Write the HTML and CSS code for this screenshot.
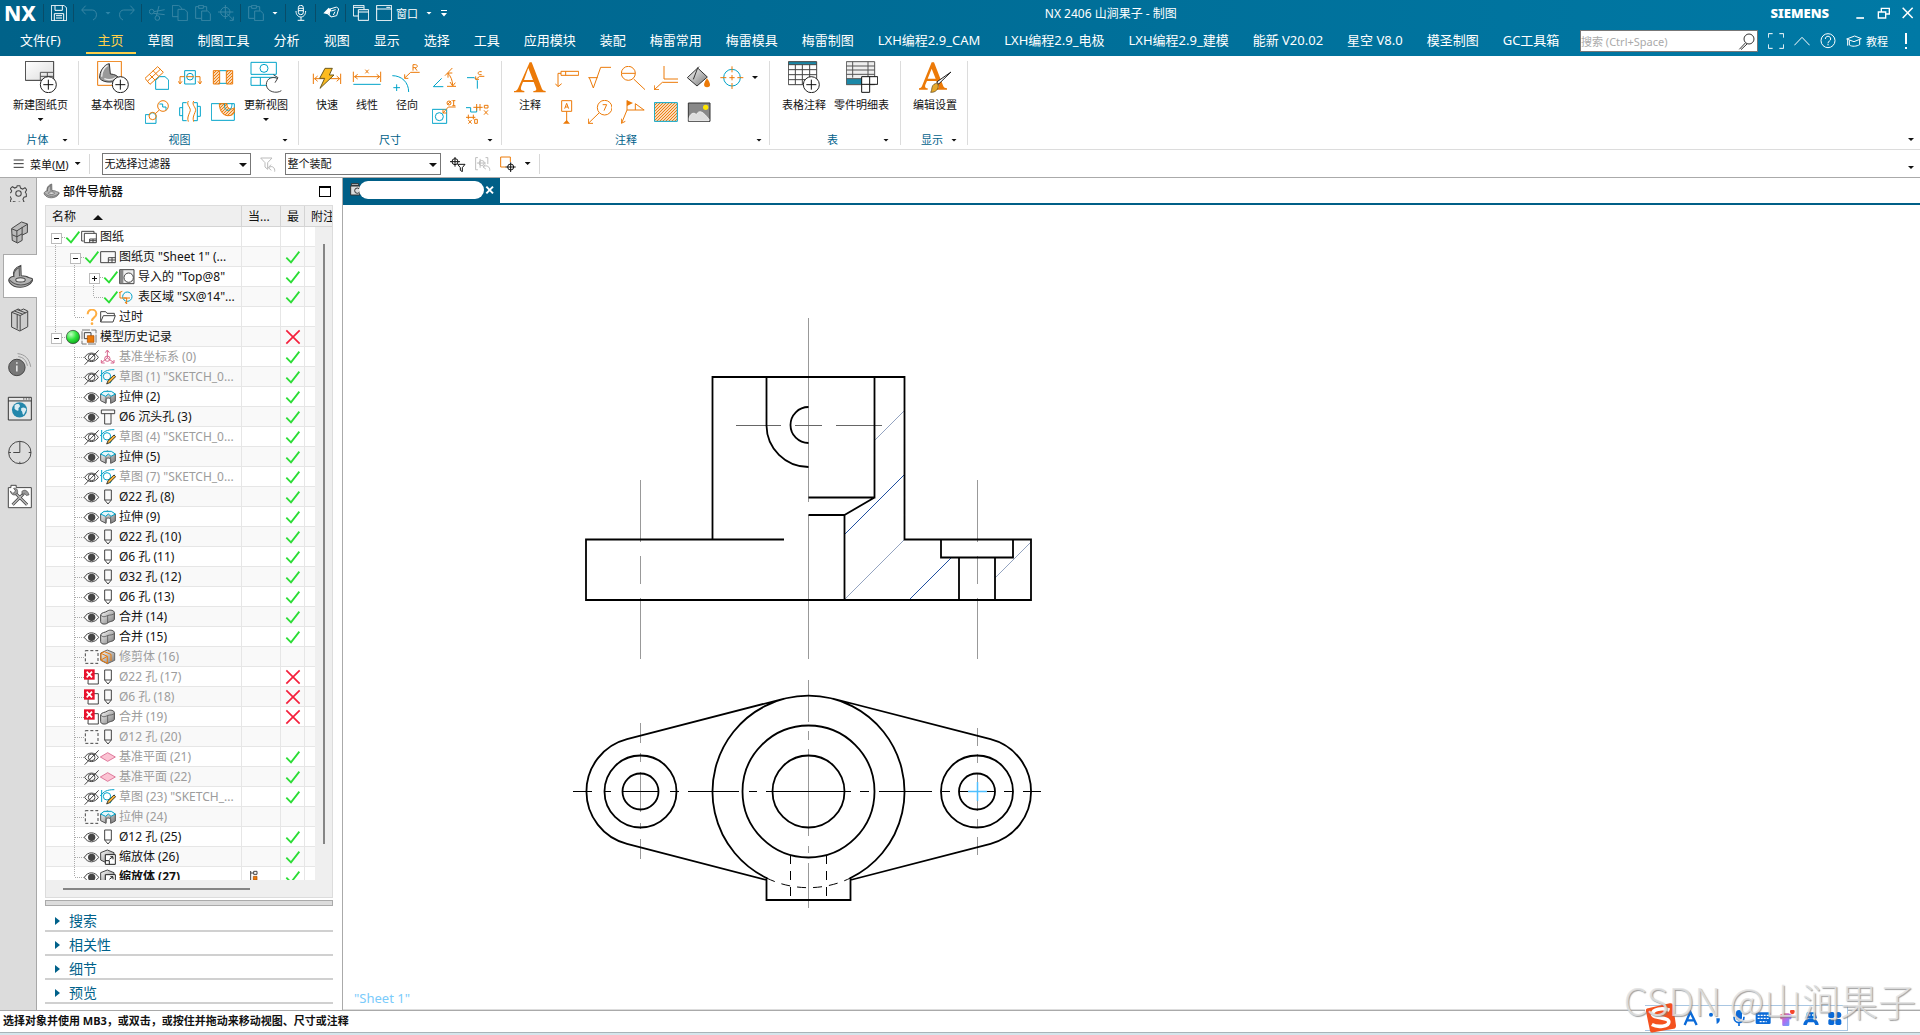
FILE: index.html
```html
<!DOCTYPE html>
<html lang="zh-CN">
<head>
<meta charset="utf-8">
<title>NX 2406 - 制图</title>
<link rel="stylesheet" href="styles.css">
</head>
<body>
<svg class="sprite" aria-hidden="true">
  <defs>
    <linearGradient id="steel" x1="0" y1="0" x2="1" y2="1"><stop offset="0" stop-color="#fff"/><stop offset="1" stop-color="#777"/></linearGradient>
    <linearGradient id="pale" x1="0" y1="0" x2="1" y2="1"><stop offset="0" stop-color="#fff"/><stop offset="1" stop-color="#ddd"/></linearGradient>
    <linearGradient id="shirt" x1="0" y1="0" x2="1" y2="1"><stop offset="0" stop-color="#ff6a4d"/><stop offset=".5" stop-color="#b06cf0"/><stop offset="1" stop-color="#4fb6ff"/></linearGradient>
    <radialGradient id="ball" cx=".35" cy=".3" r=".8"><stop offset="0" stop-color="#c4ffc4"/><stop offset=".5" stop-color="#2ee43c"/><stop offset="1" stop-color="#0a9a18"/></radialGradient>
    <pattern id="hatch" width="9" height="9" patternUnits="userSpaceOnUse"><path d="M-2 11L11-2M-2 2L2-2M7 11L11 7" stroke="#ec7a08" stroke-width="3.5"/></pattern>
  </defs>
  <symbol id="ok" viewBox="195 177 48 48"><path d="M199 203l14 14 25-32" stroke="#2bdd35" stroke-width="5.5"/></symbol>
  <symbol id="bad" viewBox="855 477 48 48"><path d="M859 481l40 40M899 481l-40 40" stroke="#f5203c" stroke-width="5"/></symbol>
  <symbol id="sheets" viewBox="243 177 48 48"><path class="k" d="M251 213h-6v-29h37v6M253 190h36v28h-36z"/><path class="k" d="M269 218v-11h20M279 207v11M269 212h20"/></symbol>
  <symbol id="sheet" viewBox="300 237 48 48"><path class="k" d="M302 245h44v33h-44z"/><path class="k" d="M325 278v-15h21M336 263v15M325 270h21"/></symbol>
  <symbol id="import" viewBox="357 297 48 48"><path class="k" fill="#eee" d="M359 299h43v42h-43z"/><path d="M360 300h10v40h-10z" fill="#888"/><circle class="k" cx="386" cy="323" r="14" fill="#fff"/></symbol>
  <symbol id="region" viewBox="357 357 48 48"><circle class="c" cx="382" cy="380" r="14"/><path class="o" d="M360 366v18h20v18M357 368l10-4M372 384h18M380 402l-5-6"/></symbol>
  <symbol id="ask" viewBox="252 417 48 48"><path d="M263 433c0-20 26-17 26-2 0 12-13 10-13 22" stroke="#ffae42" stroke-width="6"/><circle cx="276" cy="461" r="4" fill="#ffae42"/></symbol>
  <symbol id="folder" viewBox="300 417 48 48"><path class="k" d="M302 456v-31h15l4 5h22v7M302 456l8-19h36l-7 19z"/></symbol>
  <symbol id="green" viewBox="195 477 48 48"><circle cx="219" cy="501" r="20" fill="url(#ball)" stroke="#333" stroke-width="2"/></symbol>
  <symbol id="hist" viewBox="243 477 48 48"><path d="M246 480h42v42h-42z" stroke="#777" stroke-width="3" stroke-dasharray="24 4"/><path class="k" d="M253 488h20v18h-20z"/><path d="M262 497h20v20h-20z" fill="#ec7a08" stroke="#a34a00" stroke-width="2"/></symbol>
  <symbol id="hid" viewBox="252 537 48 48"><path class="k" d="M254 562c10-17 31-17 41 0-10 17-31 17-41 0z"/><circle class="k" cx="275" cy="562" r="10"/><path class="k" d="M254 584l42-43"/></symbol>
  <symbol id="eye" viewBox="252 657 48 48"><path class="k" d="M253 682c10-18 32-18 43 0-11 18-33 18-43 0z"/><circle cx="275" cy="682" r="11" fill="#444"/></symbol>
  <symbol id="none" viewBox="252 657 48 48"><path class="k" stroke-dasharray="9 6" d="M256 662h38v38h-38z"/></symbol>
  <symbol id="err" viewBox="252 717 48 48"><path class="k" d="M265 731h30v31h-31z" fill="#fff"/><path d="M252 718h32v31h-32z" fill="#e8122c"/><path d="M260 725l16 17M276 725l-16 17" stroke="#fff" stroke-width="5"/></symbol>
  <symbol id="csys" viewBox="300 537 48 48"><path d="M322 542v22l-18 14M322 564l20 14M316 548l6-8 6 8M304 570v9h10M342 570v9h-10" stroke="#d8648c" stroke-width="3"/><circle cx="322" cy="566" r="8" stroke="#d8648c" stroke-width="3"/></symbol>
  <symbol id="sketch" viewBox="300 597 48 48"><path class="c" d="M305 600v36M301 618c10-14 20-19 42-19M330 640l14-26"/><circle class="c" cx="321" cy="619" r="11"/><path d="M320 642l4-10 18-17 5 5-18 18z" fill="#f6b43c" stroke="#222" stroke-width="2.5"/></symbol>
  <symbol id="extr" viewBox="300 657 48 48"><path d="M302 672l20-9 24 9v21l-14 7v-10c0-8-14-8-14 0v10l-16-8z" fill="url(#steel)" stroke="#555" stroke-width="3"/><path d="M318 680v18M332 680v18" stroke="#666" stroke-width="3"/><path class="c" d="M302 672l10-8h22l12 8-13 7-8-7-8 7z" fill="#e6f6fa"/></symbol>
  <symbol id="cbore" viewBox="300 717 48 48"><path class="k" d="M304 720h40v11h-40zM314 731v31h19v-31"/></symbol>
  <symbol id="hole" viewBox="300 177 48 48"><path class="k" d="M314 180h20v30l-10 12-10-12zM314 210h20"/></symbol>
  <symbol id="unite" viewBox="300 537 48 48"><path d="M302 555c1-8 14-7 20-12 8-5 21-2 21 5v19c0 8-14 6-20 12-8 6-21 3-21-4z" fill="url(#steel)" stroke="#444" stroke-width="3"/><path d="M302 555c6 8 14 5 20 2s18-1 21-7M323 557v22" stroke="#555" stroke-width="2.5"/></symbol>
  <symbol id="trim" viewBox="300 657 48 48"><path d="M322 660l22 9v22l-22 10-20-10v-22z" fill="url(#steel)" stroke="#666" stroke-width="3"/><path class="o" d="M303 670l19 9v21l-19-10zM303 670l10-5 20 8v20M303 690l19-11"/></symbol>
  <symbol id="plane" viewBox="300 237 48 48"><path d="M301 261l22-13 23 13-23 13z" fill="#fbc3d3" stroke="#d8648c" stroke-width="2.5"/></symbol>
  <symbol id="scale" viewBox="300 537 48 48"><path d="M322 540l20 8v24l-20 8-20-10v-22z" fill="url(#steel)" stroke="#444" stroke-width="3"/><path d="M316 554h30v29h-30z" fill="#fff" stroke="#222" stroke-width="3"/><path d="M316 572h12v11M328 568l11-8M331 560h8v8" stroke="#222" stroke-width="3"/></symbol>
  <symbol id="flag" viewBox="744 597 48 48"><path class="k" d="M752 603v28M752 609h8"/><path class="k" d="M761 604h10v9h-10z"/><path d="M760 619h11v11h-11z" fill="#ec7a08" stroke="#a34a00" stroke-width="2"/></symbol>
  <symbol id="part" viewBox="20 285 80 72"><path d="M28 326c4-5 8-6 12-5-4-13 3-27 21-33l1 31c10 0 18 2 22 5l10 3c3 1 2 8-1 10-4 8-18 16-34 16-14 0-24-5-31-14-4-5-3-10 0-13z" fill="#b4b4b4" stroke="#444" stroke-width="3"/><path d="M40 322c-1-12 6-22 16-28l1 26M27 331c12 12 22 15 34 15 12 0 28-5 34-15" stroke="#555" stroke-width="3"/><ellipse cx="60" cy="331" rx="14" ry="6" fill="#e8e8e8" stroke="#444" stroke-width="3"/></symbol>
</svg>

<div class="app">
<header class="top">
  <div class="titlebar">
    <strong class="logo">NX</strong>
    <span class="vs"></span>
    <button class="qb" aria-label="保存"><svg viewBox="153 15 48 48"><path class="w" d="M154 16h38l8 8v38h-46zM165 17v14h22v-14M163 62v-21h28v21M168 47h18M168 54h18"/></svg></button>
    <span class="vs"></span>
    <button class="qb dim" aria-label="撤销"><svg viewBox="240 15 48 48"><path class="w" d="M254 17l-12 13 12 13M243 30h31c15 0 17 24 2 30"/></svg></button>
    <i class="arr dim"></i>
    <button class="qb dim" aria-label="重做"><svg viewBox="354 15 48 48"><path class="w" d="M388 17l12 13-12 13M399 30h-31c-15 0-17 24-2 30"/></svg></button>
    <span class="vs"></span>
    <button class="qb dim" aria-label="剪切"><svg viewBox="441 15 48 48"><circle class="w" cx="449" cy="35" r="7"/><circle class="w" cx="466" cy="54" r="7"/><path class="w" d="M455 40l33 4M463 48l8-30M456 35l32-6"/></svg></button>
    <button class="qb dim" aria-label="复制"><svg viewBox="510 15 48 48"><path class="w" d="M528 50h-17v-34h19l9 8v4M528 28h20l8 8v26h-28z"/></svg></button>
    <button class="qb dim" aria-label="粘贴"><svg viewBox="579 15 48 48"><path class="w" d="M598 55h-17v-35h9v-4h14v4h10v12M590 20v5h14v-5M599 33h18l8 8v21h-26z"/></svg></button>
    <button class="qb dim" aria-label="定位"><svg viewBox="649 15 48 48"><circle class="w" cx="671" cy="36" r="14"/><path class="w" d="M649 36h46M671 15v42M675 40l20 20M695 50v11h-11"/></svg></button>
    <span class="vs"></span>
    <button class="qb dim" aria-label="粘贴选项"><svg viewBox="735 15 48 48"><path class="w" d="M754 55h-17v-35h9v-4h14v4h10v12M746 20v5h14v-5M755 33h18l8 8v21h-26z"/></svg></button>
    <i class="arr lite"></i>
    <span class="vs"></span>
    <button class="qb" aria-label="语音"><svg viewBox="866 15 48 48"><rect class="w" x="882" y="16" width="15" height="28" rx="7"/><path class="w" d="M875 33c0 24 29 24 29 0M890 51v10M880 61h20M883 25h14M883 32h14"/></svg></button>
    <span class="vs"></span>
    <button class="qb" aria-label="触控"><svg viewBox="954 15 48 48"><path class="w" d="M975 27l20-6 6 6-6 20-17 4-5-8z"/><path d="M955 40l16-17 9 8-9 9 5 11-8-8z" fill="#fff"/><path class="w" d="M979 33l13-4M985 45l5-10"/></svg></button>
    <span class="vs"></span>
    <button class="qb" aria-label="切换窗口"><svg viewBox="1041 15 48 48"><path class="w" d="M1057 48h-15v-32h32v12M1043 22h30M1057 29h31v32h-31zM1057 36h31"/></svg></button>
    <button class="qb wide"><svg viewBox="1110 15 48 48"><path class="w" d="M1112 16h45v46h-45zM1112 27h45M1141 22h12"/></svg>窗口</button>
    <i class="arr lite"></i>
    <i class="arr lite bar"></i>
    <h1 class="caption">NX 2406 山涧果子 - 制图</h1>
    <strong class="brand">SIEMENS</strong>
    <button class="wb" aria-label="最小化"><svg viewBox="1233 15 48 48"><path d="M1246 54h23" stroke="#fff" stroke-width="5"/></svg></button>
    <button class="wb" aria-label="还原"><svg viewBox="1305 15 48 48"><path class="w4" d="M1321 34v-9h24v17h-11M1312 36h22v18h-22z"/></svg></button>
    <button class="wb" aria-label="关闭"><svg viewBox="1377 15 48 48"><path d="M1385 23l30 31M1415 23l-30 31" stroke="#fff" stroke-width="4.5"/></svg></button>
  </div>
  <div class="menubar">
    <nav class="tabs">
      <a href="#" class="file">文件(F)</a><a href="#" class="on">主页</a><a href="#">草图</a><a href="#">制图工具</a><a href="#">分析</a><a href="#">视图</a><a href="#">显示</a><a href="#">选择</a><a href="#">工具</a><a href="#">应用模块</a><a href="#">装配</a><a href="#">梅雷常用</a><a href="#">梅雷模具</a><a href="#">梅雷制图</a><a href="#">LXH编程2.9_CAM</a><a href="#">LXH编程2.9_电极</a><a href="#">LXH编程2.9_建模</a><a href="#">能新 V20.02</a><a href="#">星空 V8.0</a><a href="#">模圣制图</a><a href="#">GC工具箱</a>
    </nav>
    <label class="search"><input type="text" placeholder="搜索 (Ctrl+Space)" aria-label="搜索"><svg viewBox="895 97 51 51"><circle cx="928" cy="115" r="15" stroke="#333" stroke-width="3"/><path d="M917 127l-18 19M922 130l-18 17" stroke="#333" stroke-width="3"/></svg></label>
    <div class="helpers">
      <button aria-label="全屏"><svg viewBox="984 99 48 48"><path class="w" d="M985 113v-12h13M1018 101h13v12M1031 133v12h-13M998 145h-13v-12"/></svg></button>
      <button aria-label="折叠"><svg viewBox="1062 99 48 48"><path class="w" d="M1063 136l23-24 23 24"/></svg></button>
      <button aria-label="帮助"><svg viewBox="1139 99 48 48"><circle class="w" cx="1163" cy="122" r="21"/><path class="w" d="M1155 117c0-11 16-11 16 0 0 6-8 6-8 13M1163 132v4"/></svg></button>
      <button class="tut"><svg viewBox="1217 99 48 48"><path class="w" d="M1219 117l24-9 20 8-22 9zM1227 121v14c8 6 22 4 31-1v-15M1222 119v18"/></svg>教程</button>
      <button aria-label="通知"><svg viewBox="1374 99 48 48"><path d="M1398 99v33M1398 141v6" stroke="#fff" stroke-width="6"/></svg></button>
    </div>
  </div>
</header>

<div class="ribbon">
  <section class="grp g1"><div class="tools">
    <button class="big"><svg viewBox="72 183 96 96"><path d="M73 184h85v57h-85z" fill="url(#pale)" stroke="#333" stroke-width="3"/><path d="M118 241v-24h40M118 229h40M139 217v20" stroke="#555" stroke-width="3"/><circle class="ring" cx="142" cy="254" r="24"/><path class="b" d="M127 254h30M142 239v30"/></svg>新建图纸页<i class="arr"></i></button>
  </div><div class="cap"><span>片体</span><i class="arr"></i></div></section>
  <section class="grp g2"><div class="tools">
    <button class="big"><svg viewBox="291 183 96 96"><path class="o" d="M293 184h71v72h-71z"/><path d="M299 235c-2-20 14-42 29-44l3 31c14 1 24 6 26 15-8 10-45 15-58-2z" fill="#999" stroke="#333" stroke-width="3"/><path d="M305 230c0-14 8-28 18-34M313 236c14 6 24 4 36-4" stroke="#eee" stroke-width="4"/><circle class="ring" cx="361" cy="254" r="24"/><path class="b" d="M346 254h30M361 239v30"/></svg>基本视图</button>
    <div class="grid c3">
      <button aria-label="投影视图"><svg viewBox="432 195 72 72"><path class="o" d="M432 232l38-35 17 17-40 36zM445 220l18 18M456 209l18 18M440 240l38-35"/><path class="c" d="M464 238l12-11h16l11 10v28h-39z" fill="#fff"/></svg></button>
      <button aria-label="剖视图"><svg viewBox="531 195 72 72"><path class="c" d="M551 209h32v40h-32z"/><circle class="c" cx="567" cy="227" r="10"/><path class="o" d="M551 227h-14v20M532 241l5 8 6-8M583 227h14v20M591 241l6 8 5-8M556 227h22"/></svg></button>
      <button aria-label="剖面"><svg viewBox="630 195 72 72"><path fill="url(#hatch)" d="M637 209h19v40h-19zM676 209h19v40h-19z"/><path class="o" d="M637 209h19v40h-19zM676 209h19v40h-19z"/><path class="c" d="M656 247h20M656 209h20"/></svg></button>
      <button aria-label="局部放大图"><svg viewBox="432 300 72 72"><path class="c" d="M433 344h14v-2c6-7 16-3 18 8v20h-32zM475 312h10v9h10v10"/><circle class="o" cx="486" cy="318" r="16"/><circle class="o" cx="455" cy="348" r="11"/><path class="o" d="M463 341l12-11"/></svg></button>
      <button aria-label="断开视图"><svg viewBox="531 300 72 72"><path class="c" d="M545 323h-9v24h9M557 308h-12v54h12M578 308h11v54h-11M589 319h9v30h-9"/><path class="o" d="M562 303c-8 14 12 20 4 34-4 10-8 18-4 28M578 303c-8 14 12 20 4 34-4 10-8 18-4 28"/></svg></button>
      <button aria-label="局部剖"><svg viewBox="630 300 72 72"><path class="c" d="M631 311h69v50h-69z"/><path class="o" fill="url(#hatch)" d="M655 311c0 14 6 34 24 36 12 1 20-4 21-10v-14c-8 8-23 4-22-12z"/><path class="c" d="M671 311c-4 26 22 28 22 0"/></svg></button>
    </div>
    <button class="big"><svg viewBox="748 183 96 96"><path class="c" d="M751 187h76v36h-76zM827 232h-76v24h48M779 232v24"/><circle class="c" cx="790" cy="205" r="12"/><path d="M842 272c-14 10-44 4-45-18 0-20 20-26 34-18M818 224l14 9-9 15" stroke="#444" stroke-width="3"/></svg>更新视图<i class="arr"></i></button>
  </div><div class="cap"><span>视图</span><i class="arr"></i></div></section>
  <section class="grp g3"><div class="tools">
    <button class="big"><svg viewBox="930 183 96 96"><path class="o" d="M937 221v31M1019 221v31M940 236h76M950 228l-9 8 9 8M1007 228l9 8-9 8"/><path d="M972 205h22l-9 20h14l-42 40 14-30h-15z" fill="#fdbb1e" stroke="#6b5a20" stroke-width="3"/></svg>快速</button>
    <button class="big"><svg viewBox="1053 183 96 96"><path class="o" d="M1060 215v31M1142 215v31M1063 230h76M1073 223l-9 7 9 7M1130 223l9 7-9 7M1096 209l10 11M1106 209l-10 11"/><path class="c" d="M1060 253h82"/></svg>线性</button>
    <button class="big"><svg viewBox="1172 183 96 96"><path class="o" d="M1258 217h-27l-18 17M1213 223v12h11M1238 212v-18h7c8 0 8 9 0 9h-7M1244 203l6 9"/><path class="c" d="M1176 227c28 0 49 20 49 49M1179 263h20M1189 253v20"/></svg>径向</button>
    <div class="grid c2">
      <button aria-label="角度尺寸"><svg viewBox="1299 195 72 72"><path class="c" d="M1328 232l-25 25h30"/><path class="o" d="M1338 224l22-23M1344 256h28M1346 216c10 10 14 22 15 36M1347 230v-14h13M1353 243l8 12 8-10"/></svg></button>
      <button aria-label="倒斜角"><svg viewBox="1396 195 72 72"><path class="c" d="M1402 230h22l9 9v24"/><path class="o" d="M1454 226h-14l-10 8M1428 226v9h10M1446 212h-6c-6 0-6 9 0 9h6"/></svg></button>
      <button aria-label="厚度"><svg viewBox="1299 300 72 72"><path class="c" d="M1300 328h43v42h-43z"/><circle class="c" cx="1321" cy="350" r="12"/><path class="o" d="M1370 321h-22l-16 18M1332 328v11h11M1345 314l12-12M1364 302v15M1360 302h9M1360 317h9"/><circle class="o" cx="1350" cy="309" r="6"/></svg></button>
      <button aria-label="坐标"><svg viewBox="1399 300 72 72"><path class="c" d="M1402 323h14v13h18v-15"/><path class="o" d="M1434 312v20M1444 312v20M1424 322h28M1402 352h28M1409 344v14M1424 344v14M1457 316h11v8h-11zM1456 331l12 13M1468 331l-12 13M1409 360l10 11M1419 360l-10 11M1428 358h8v12h-8z"/></svg></button>
    </div>
  </div><div class="cap"><span>尺寸</span><i class="arr"></i></div></section>
  <section class="grp g4"><div class="tools">
    <button class="big"><svg viewBox="99 183 96 96"><path d="M146 187h6l31 80c2 4 5 6 11 6v4h-37v-4c9 0 10-3 8-9l-7-18h-32l-5 13c-3 9-1 14 9 14v4h-31v-4c7 0 10-3 13-10zM142 204l-13 36h27z" fill="#ec7a08" fill-rule="evenodd"/></svg>注释</button>
    <div class="grid c6">
      <button aria-label="特征控制框"><svg viewBox="222 195 72 72"><path class="o" d="M240 211h53v12h-53zM254 211v12M240 217h-9v39M223 248l8 9 11-9"/></svg></button>
      <button aria-label="表面粗糙度"><svg viewBox="321 195 72 72"><path class="o" d="M322 230h28M325 230l12 31 22-62h31"/></svg></button>
      <button aria-label="放大"><svg viewBox="420 195 72 72"><circle class="o" cx="442" cy="217" r="21"/><path class="o" d="M422 217h41M458 234l34 32"/></svg></button>
      <button aria-label="目标点"><svg viewBox="519 195 72 72"><path class="o" d="M549 195v39h42M592 244h-48l-24 22M520 253v13h14"/></svg></button>
      <button aria-label="填充"><svg viewBox="618 195 72 72"><path d="M619 230l31-29 29 27-31 27z" fill="url(#steel)" stroke="#333" stroke-width="3"/><path d="M650 201l-13 34M650 201l4-4" stroke="#333" stroke-width="3"/><path d="M678 232c-10 14-13 26 0 27 14-1 10-13 0-27z" fill="#ec7a08"/></svg></button>
      <button aria-label="中心标记"><svg viewBox="716 195 72 72"><circle class="c" cx="752" cy="230" r="25"/><path class="o" d="M717 230h18M768 230h18M744 230h16M752 196v18M752 222v16M752 246v18"/></svg></button>
      <button aria-label="基准特征"><svg viewBox="222 300 72 72"><path class="o" d="M242 302h30v32h-30zM257 334v32M251 326l6-16 6 16M253 321h8"/><path d="M246 371l11-11 10 11z" fill="#ec7a08"/></svg></button>
      <button aria-label="符号标注"><svg viewBox="321 300 72 72"><circle class="o" cx="371" cy="323" r="22"/><path class="o" d="M354 339l-32 31M322 356v14h14M365 314h12l-8 18"/></svg></button>
      <button aria-label="焊接符号"><svg viewBox="420 300 72 72"><path class="o" d="M438 301v29h52M438 330l-16 39M421 356v14l12-6M463 330v-19l26 19"/><path d="M438 301l18 8-18 9z" fill="#ec7a08"/></svg></button>
      <button aria-label="剖面线"><svg viewBox="519 300 72 72"><path fill="url(#hatch)" d="M520 308h69v56h-69z"/><path class="c" d="M520 308h69v56h-69z"/></svg></button>
      <button aria-label="图像"><svg viewBox="618 300 72 72"><path d="M622 309h65v55h-65z" fill="#888" stroke="#333" stroke-width="3"/><circle cx="674" cy="322" r="8" fill="#ffe600"/><path d="M624 356c2-14 14-22 22-12 8-16 20-10 38 14v4h-60z" fill="#ddd" stroke="#fff" stroke-width="2"/></svg></button>
    </div>
    <i class="arr more"></i>
  </div><div class="cap"><span>注释</span><i class="arr"></i></div></section>
  <section class="grp g5"><div class="tools">
    <button class="big"><svg viewBox="921 183 96 96"><path d="M922 185h85v69h-85z" fill="#fff"/><path d="M922 185h85v9h-85z" fill="#1b88a8"/><path d="M922 185h85v69h-85zM922 194h85M922 209h85M922 224h85M922 239h85M943 194v60M964 194v60M986 194v60" stroke="#444" stroke-width="3"/><circle class="ring" cx="991" cy="254" r="24"/><path class="b" d="M976 254h30M991 239v30"/></svg>表格注释</button>
    <button class="big"><svg viewBox="1092 183 96 96"><path d="M1093 185h85v69h-85z" fill="#eee"/><path d="M1093 236h50v18h-50z" fill="#1b88a8"/><path d="M1093 185h85v69h-85zM1093 198h85M1093 210h85M1093 223h85M1093 236h85M1112 185v48M1158 185v48" stroke="#555" stroke-width="3"/><path d="M1139 230h48v23h-24v24h-24zM1163 230v23h-24" fill="#fff" stroke="#111" stroke-width="3"/></svg>零件明细表</button>
  </div><div class="cap"><span>表</span><i class="arr"></i></div></section>
  <section class="grp g6"><div class="tools">
    <button class="big"><svg viewBox="1314 183 96 96"><path d="M1352 187h7l28 72c2 4 5 6 11 6v4h-32v-4c7 0 8-3 6-8l-6-14h-28l-5 11c-2 7 0 11 7 11v4h-27v-4c6 0 9-3 11-9zM1352 206l-12 30h24z" fill="#ec7a08" fill-rule="evenodd"/><path d="M1410 216l-37 36-6-6z" fill="#fff" stroke="#222" stroke-width="3"/><path d="M1371 252c4 16-8 26-22 25 4-6 2-12 6-20 5-7 11-8 16-5z" fill="#e6a92c" stroke="#554010" stroke-width="2"/></svg>编辑设置</button>
  </div><div class="cap"><span>显示</span><i class="arr"></i></div></section>
  <i class="arr end"></i>
</div>

<div class="selbar">
  <button class="menu"><svg viewBox="36 474 33 33"><path d="M38 480h30M38 491h30M38 502h30" stroke="#333" stroke-width="3"/></svg><span>菜单(<u>M</u>)</span><i class="arr"></i></button>
  <span class="sep"></span>
  <span class="dd f1"><select aria-label="类型过滤器"><option>无选择过滤器</option></select></span>
  <button class="sb" aria-label="重置过滤器"><svg viewBox="778 466 48 48"><path d="M780 472h34l-13 14v20l-8-7v-13zM804 501c10-8 20 0 18 12M811 492l-8 9 9 8" stroke="#bbb" stroke-width="3"/></svg></button>
  <span class="dd f2"><select aria-label="选择范围"><option>整个装配</option></select></span>
  <button class="sb" aria-label="常规选择过滤器"><svg viewBox="1347 466 48 48"><circle class="b" cx="1362" cy="483" r="9"/><path class="b" d="M1347 483h30M1362 469v29M1370 491h22l-8 10v12l-6-4v-8z"/></svg></button>
  <button class="sb" aria-label="选择意图"><svg viewBox="1424 466 50 48"><path d="M1433 470h-7v38h7M1457 470h7v20M1440 474v28M1430 487h28M1450 499c10-8 22 0 20 12M1456 492l-7 7 9 7" stroke="#bbb" stroke-width="3"/><circle cx="1445" cy="487" r="8" stroke="#bbb" stroke-width="3"/></svg></button>
  <button class="sb" aria-label="捕捉点"><svg viewBox="57 466 48 48"><path class="o" d="M88 484v-15h-29v30h16"/><circle class="b" cx="89" cy="499" r="9"/><path class="b" d="M74 499h30M89 485v29"/></svg></button>
  <i class="arr"></i>
  <span class="sep last"></span>
  <i class="arr end"></i>
</div>

<main class="work">
  <aside class="rail">
    <button class="gear" aria-label="设置"><svg viewBox="29 45 50 50"><g stroke="#444" stroke-width="3"><path d="M50 48h8l2 7 6 3 7-4 5 6-4 7 3 5h0v8l-7 2-3 6 3 7-6 5-7-4-6 2-1 0-4-1-6-2-6 4-5-6 4-6-3-6-5-3v-7l7-3 2-5-4-6 6-6 7 4 6-3z" transform="translate(0 -1)"/><circle cx="54" cy="70" r="8"/></g></svg></button>
    <button aria-label="装配导航器"><svg viewBox="20 149 76 76"><path d="M34 175l30-20 18 6v26l-16 8v16l-14 8-16-8z" fill="#bbb" stroke="#444" stroke-width="3"/><path d="M35 176l15 6 32-20M50 182v37M36 194l14 6 16-9M66 170v25" stroke="#444" stroke-width="3"/></svg></button>
    <button class="on" aria-label="部件导航器"><svg><use href="#part"/></svg></button>
    <button aria-label="重用库"><svg viewBox="23 417 76 76"><path d="M37 430l20-10 8 4 8-4 13 6v48l-24 13-25-12z" fill="#ccc" stroke="#444" stroke-width="3"/><path d="M37 430l26 10 23-12M63 440v46M45 426l26 10M54 422l26 10M54 437v43" stroke="#444" stroke-width="3"/></svg></button>
    <button aria-label="HD3D"><svg viewBox="20 546 76 76"><circle cx="50" cy="593" r="25" fill="#777" stroke="#444" stroke-width="3"/><path d="M50 587v18M50 577v5" stroke="#fff" stroke-width="4"/><path d="M54 560c16 2 25 12 28 28M52 551c23 2 36 16 40 40" stroke="#999" stroke-width="3"/></svg></button>
    <button aria-label="浏览器"><svg viewBox="21 679 76 76"><path d="M25 683h70v69h-70zM25 694h70" fill="#e8e8e8" stroke="#333" stroke-width="3"/><path d="M70 688h22" stroke="#333" stroke-width="3" stroke-dasharray="4 4"/><circle cx="59" cy="721" r="23" fill="#2487ab"/><path d="M44 708c6-6 14-6 16 0s-6 6-4 12-8 4-12-2zM64 716c6-4 14-2 16 4l-8 16c-6 0-2-10-8-12z" fill="#d9ecf3"/></svg></button>
    <button aria-label="历史记录"><svg viewBox="20 30 76 76"><circle cx="59" cy="68" r="34" stroke="#444" stroke-width="3"/><path d="M59 34v34H39M59 96v6M86 68h7M25 68h7" stroke="#444" stroke-width="3"/></svg></button>
    <button aria-label="加工工具"><svg viewBox="21 163 76 76"><path d="M25 174h8v-7h16v7h46v61h-70z" fill="#fff" stroke="#444" stroke-width="3"/><path d="M38 226l34-34M82 226l-38-38" stroke="#444" stroke-width="9"/><path d="M38 226l34-34M82 226l-38-38" stroke="#bbb" stroke-width="4"/><path d="M66 186c8-8 18-4 22 10l-8 2-6-6-6 4zM31 184l8 8 8-8-6-8c8-2 14 4 12 14-6 10-20 8-22-6z" fill="#999" stroke="#444" stroke-width="2"/></svg></button>
  </aside>

  <section class="panel">
    <div class="phead"><svg><use href="#part"/></svg><h2>部件导航器</h2><button class="maxi" aria-label="最大化"></button></div>
    <div class="grid-box">
      <div class="scroller">
      <table>
        <colgroup><col class="w1"><col class="w2"><col class="w3"><col></colgroup>
        <thead><tr><th>名称<i class="sort"></i></th><th>当...</th><th>最</th><th>附注</th></tr></thead>
        <tbody>
        <tr><td><div><i class="g down box minus"></i><svg><use href="#ok"/></svg><svg><use href="#sheets"/></svg>图纸</div></td><td></td><td></td><td></td></tr>
        <tr><td><div><i class="g v"></i><i class="g down box minus"></i><svg><use href="#ok"/></svg><svg><use href="#sheet"/></svg>图纸页 "Sheet 1" (...</div></td><td></td><td><svg><use href="#ok"/></svg></td><td></td></tr>
        <tr><td><div><i class="g v"></i><i class="g v"></i><i class="g down box plus"></i><svg><use href="#ok"/></svg><svg><use href="#import"/></svg>导入的 "Top@8"</div></td><td></td><td><svg><use href="#ok"/></svg></td><td></td></tr>
        <tr><td><div><i class="g v"></i><i class="g v"></i><i class="g e"></i><svg><use href="#ok"/></svg><svg><use href="#region"/></svg>表区域 "SX@14"...</div></td><td></td><td><svg><use href="#ok"/></svg></td><td></td></tr>
        <tr><td><div><i class="g v"></i><i class="g e"></i><svg><use href="#ask"/></svg><svg><use href="#folder"/></svg>过时</div></td><td></td><td></td><td></td></tr>
        <tr><td><div><i class="g e box minus"></i><svg><use href="#green"/></svg><svg><use href="#hist"/></svg>模型历史记录</div></td><td></td><td><svg><use href="#bad"/></svg></td><td></td></tr>
        <tr class="off"><td><div><i class="g"></i><i class="g t"></i><svg><use href="#hid"/></svg><svg><use href="#csys"/></svg>基准坐标系 (0)</div></td><td></td><td><svg><use href="#ok"/></svg></td><td></td></tr>
        <tr class="off"><td><div><i class="g"></i><i class="g t"></i><svg><use href="#hid"/></svg><svg><use href="#sketch"/></svg>草图 (1) "SKETCH_0...</div></td><td></td><td><svg><use href="#ok"/></svg></td><td></td></tr>
        <tr><td><div><i class="g"></i><i class="g t"></i><svg><use href="#eye"/></svg><svg><use href="#extr"/></svg>拉伸 (2)</div></td><td></td><td><svg><use href="#ok"/></svg></td><td></td></tr>
        <tr><td><div><i class="g"></i><i class="g t"></i><svg><use href="#eye"/></svg><svg><use href="#cbore"/></svg>Ø6 沉头孔 (3)</div></td><td></td><td><svg><use href="#ok"/></svg></td><td></td></tr>
        <tr class="off"><td><div><i class="g"></i><i class="g t"></i><svg><use href="#hid"/></svg><svg><use href="#sketch"/></svg>草图 (4) "SKETCH_0...</div></td><td></td><td><svg><use href="#ok"/></svg></td><td></td></tr>
        <tr><td><div><i class="g"></i><i class="g t"></i><svg><use href="#eye"/></svg><svg><use href="#extr"/></svg>拉伸 (5)</div></td><td></td><td><svg><use href="#ok"/></svg></td><td></td></tr>
        <tr class="off"><td><div><i class="g"></i><i class="g t"></i><svg><use href="#hid"/></svg><svg><use href="#sketch"/></svg>草图 (7) "SKETCH_0...</div></td><td></td><td><svg><use href="#ok"/></svg></td><td></td></tr>
        <tr><td><div><i class="g"></i><i class="g t"></i><svg><use href="#eye"/></svg><svg><use href="#hole"/></svg>Ø22 孔 (8)</div></td><td></td><td><svg><use href="#ok"/></svg></td><td></td></tr>
        <tr><td><div><i class="g"></i><i class="g t"></i><svg><use href="#eye"/></svg><svg><use href="#extr"/></svg>拉伸 (9)</div></td><td></td><td><svg><use href="#ok"/></svg></td><td></td></tr>
        <tr><td><div><i class="g"></i><i class="g t"></i><svg><use href="#eye"/></svg><svg><use href="#hole"/></svg>Ø22 孔 (10)</div></td><td></td><td><svg><use href="#ok"/></svg></td><td></td></tr>
        <tr><td><div><i class="g"></i><i class="g t"></i><svg><use href="#eye"/></svg><svg><use href="#hole"/></svg>Ø6 孔 (11)</div></td><td></td><td><svg><use href="#ok"/></svg></td><td></td></tr>
        <tr><td><div><i class="g"></i><i class="g t"></i><svg><use href="#eye"/></svg><svg><use href="#hole"/></svg>Ø32 孔 (12)</div></td><td></td><td><svg><use href="#ok"/></svg></td><td></td></tr>
        <tr><td><div><i class="g"></i><i class="g t"></i><svg><use href="#eye"/></svg><svg><use href="#hole"/></svg>Ø6 孔 (13)</div></td><td></td><td><svg><use href="#ok"/></svg></td><td></td></tr>
        <tr><td><div><i class="g"></i><i class="g t"></i><svg><use href="#eye"/></svg><svg><use href="#unite"/></svg>合并 (14)</div></td><td></td><td><svg><use href="#ok"/></svg></td><td></td></tr>
        <tr><td><div><i class="g"></i><i class="g t"></i><svg><use href="#eye"/></svg><svg><use href="#unite"/></svg>合并 (15)</div></td><td></td><td><svg><use href="#ok"/></svg></td><td></td></tr>
        <tr class="off"><td><div><i class="g"></i><i class="g t"></i><svg><use href="#none"/></svg><svg><use href="#trim"/></svg>修剪体 (16)</div></td><td></td><td></td><td></td></tr>
        <tr class="off"><td><div><i class="g"></i><i class="g t"></i><svg><use href="#err"/></svg><svg><use href="#hole"/></svg>Ø22 孔 (17)</div></td><td></td><td><svg><use href="#bad"/></svg></td><td></td></tr>
        <tr class="off"><td><div><i class="g"></i><i class="g t"></i><svg><use href="#err"/></svg><svg><use href="#hole"/></svg>Ø6 孔 (18)</div></td><td></td><td><svg><use href="#bad"/></svg></td><td></td></tr>
        <tr class="off"><td><div><i class="g"></i><i class="g t"></i><svg><use href="#err"/></svg><svg><use href="#unite"/></svg>合并 (19)</div></td><td></td><td><svg><use href="#bad"/></svg></td><td></td></tr>
        <tr class="off"><td><div><i class="g"></i><i class="g t"></i><svg><use href="#none"/></svg><svg><use href="#hole"/></svg>Ø12 孔 (20)</div></td><td></td><td></td><td></td></tr>
        <tr class="off"><td><div><i class="g"></i><i class="g t"></i><svg><use href="#hid"/></svg><svg><use href="#plane"/></svg>基准平面 (21)</div></td><td></td><td><svg><use href="#ok"/></svg></td><td></td></tr>
        <tr class="off"><td><div><i class="g"></i><i class="g t"></i><svg><use href="#hid"/></svg><svg><use href="#plane"/></svg>基准平面 (22)</div></td><td></td><td><svg><use href="#ok"/></svg></td><td></td></tr>
        <tr class="off"><td><div><i class="g"></i><i class="g t"></i><svg><use href="#hid"/></svg><svg><use href="#sketch"/></svg>草图 (23) "SKETCH_...</div></td><td></td><td><svg><use href="#ok"/></svg></td><td></td></tr>
        <tr class="off"><td><div><i class="g"></i><i class="g t"></i><svg><use href="#none"/></svg><svg><use href="#extr"/></svg>拉伸 (24)</div></td><td></td><td></td><td></td></tr>
        <tr><td><div><i class="g"></i><i class="g t"></i><svg><use href="#eye"/></svg><svg><use href="#hole"/></svg>Ø12 孔 (25)</div></td><td></td><td><svg><use href="#ok"/></svg></td><td></td></tr>
        <tr><td><div><i class="g"></i><i class="g t"></i><svg><use href="#eye"/></svg><svg><use href="#scale"/></svg>缩放体 (26)</div></td><td></td><td><svg><use href="#ok"/></svg></td><td></td></tr>
        <tr class="cur"><td><div><i class="g"></i><i class="g e"></i><svg><use href="#eye"/></svg><svg><use href="#scale"/></svg>缩放体 (27)</div></td><td class="mark"><svg><use href="#flag"/></svg></td><td><svg><use href="#ok"/></svg></td><td></td></tr>
        </tbody>
      </table>
      <div class="vbar"><i></i></div>
      </div>
      <div class="hbar"><i></i></div>
    </div>
    <div class="splitter"></div>
    <div class="acc"><button>搜索</button><button>相关性</button><button>细节</button><button>预览</button></div>
  </section>

  <section class="view">
    <div class="doctabs">
      <div class="doctab"><svg viewBox="60 45 30 39"><path d="M64 47h22v5h-22zM62 54h27v27h-27z" fill="#ddd" stroke="#333" stroke-width="3"/><circle cx="82" cy="68" r="8" stroke="#333" stroke-width="3"/></svg><span class="pill"></span><button aria-label="关闭标签"><svg viewBox="463 45 30 30"><path d="M467 50l20 20M487 50l-20 20" stroke="#fff" stroke-width="6"/></svg></button></div>
    </div>
    <div class="canvas">
      <svg class="dwg" role="img" aria-label="零件工程图"><g transform="translate(-343 -205)">
        <path class="ctr" d="M808.5 318v184M808.5 515v144M640.5 480v62M640.5 556v28M640.5 598v61M977.5 480v62M977.5 556v28M977.5 598v61"/>
        <path class="ctd" d="M736 425.500h45M795 425.500h27M836 425.500h46"/>
        <path class="ht1" d="M904 411l-29 29M904 540l-60 60M1031 542l-36 36"/>
        <path class="ht2" d="M904 475l-60 60M951 558l-42 42"/>
        <path class="ln" d="M712.5 539.500V377H904.500V539.500H1031V600H586V539.500H784M766.500 377v48.500A42 42 0 0 0 808.500 467M808.500 407a18 18 0 0 0 0 36M874.500 377v120.500H808.500M874.500 497.500l-30 17.500M808.500 515h36v85M941 539.500v18h72v-18M959 557.500v42.500M995 557.500v42.500"/>
        <path class="ctr" d="M808.5 680v42M808.500 731v9M808.500 749v87M808.500 846v7M808.500 863v45M640.500 723v20M640.500 753v9M640.500 772v40M640.500 823v6M640.500 839v20M977.500 728v18M977.500 754v9M977.500 773v38M977.500 819v9M977.500 837v18"/>
        <path class="hz" d="M573 791.500h19M604 791.500h7M622 791.500h36M670 791.500h9M688 791.500h51M749 791.500h8M766 791.500h85M860 791.500h9M879 791.500h53M942 791.500h8M959 791.500h36M1004 791.500h9M1023 791.500h18"/>
        <path class="cy" d="M968 791.500h19M977.500 782v19"/>
        <circle class="ln" cx="808.500" cy="791.500" r="66"/><circle class="ln" cx="808.500" cy="791.500" r="36"/>
        <circle class="ln" cx="640.500" cy="791.500" r="36"/><circle class="ln" cx="640.500" cy="791.500" r="18"/>
        <circle class="ln" cx="977" cy="791.500" r="36"/><circle class="ln" cx="977" cy="791.500" r="18"/>
        <path class="ln" d="M766.500 878A96 96 0 1 1 850.500 878M784.500 698.500L627 739.200A54 54 0 0 0 627 843.800L766.500 880M832.500 698.500L990.500 739.200A54 54 0 0 1 990.500 843.800L850.500 880M766.500 877V900H850.500V877"/>
        <path class="ln dash" d="M790.500 855v45M826.500 855v45M766.500 878A96 96 0 0 0 850.500 878"/>
      </g></svg>
      <span class="sheetname">"Sheet 1"</span>
    </div>
  </section>
</main>

<footer class="status">选择对象并使用 MB3，或双击，或按住并拖动来移动视图、尺寸或注释</footer>
<div class="strip"></div>

<div class="ime">
  <svg class="sogou" viewBox="198 126 96 92"><path d="M203 143l70-16c6-1 9 1 10 6l9 62c0 6-2 9-7 10l-62 11c-6 1-10-1-11-6l-12-58c-1-5 0-8 3-9z" fill="#f4511e"/><path d="M272 148c-22-8-52-4-52 12 0 14 50 8 50 24 0 14-34 18-52 8" stroke="#fff" stroke-width="11"/></svg>
  <svg viewBox="311 153 48 48"><path d="M316 198l17-39 19 39M322 184h24" stroke="#0a6ad8" stroke-width="7"/></svg>
  <svg viewBox="384 153 48 48"><circle cx="396" cy="167" r="6" fill="#0a6ad8"/><path d="M412 178h10c2 8-2 14-9 17z" fill="#0a6ad8"/></svg>
  <svg viewBox="453 153 48 48"><rect x="468" y="153" width="18" height="31" rx="9" fill="#0a6ad8"/><path d="M462 173c0 24 30 24 30 0M477 191v10" stroke="#0a6ad8" stroke-width="5"/></svg>
  <svg viewBox="526 153 48 48"><rect x="528" y="160" width="45" height="35" rx="4" fill="#0a6ad8"/><path d="M534 169h33M534 178h33M540 188h21" stroke="#fff" stroke-width="4" stroke-dasharray="6 3"/></svg>
  <svg viewBox="599 147 54 54"><path d="M601 164l12-6h18l12 6-3 14h-6v19q0 4-4 4h-16q-4 0-4-4v-19h-6z" fill="url(#shirt)"/><circle cx="644" cy="153" r="8" fill="#f4452c"/></svg>
  <svg viewBox="671 153 48 48"><path d="M683 160h25l5 18h-35zM672 198c0-26 46-26 46 0h-10l-4-8h-18l-4 8z" fill="#0a6ad8"/><path d="M688 168h5M698 168h5" stroke="#fff" stroke-width="5"/></svg>
  <svg viewBox="743 153 48 48"><rect x="747" y="159" width="18" height="18" rx="5" fill="#0a6ad8"/><rect x="768" y="159" width="18" height="18" rx="9" fill="#0a6ad8"/><rect x="747" y="180" width="18" height="18" rx="5" fill="#0a6ad8"/><rect x="768" y="180" width="18" height="18" rx="5" fill="#0a6ad8"/></svg>
</div>
<div class="credit">CSDN @山涧果子</div>
</div>
</body>
</html>
```

FILE: styles.css
```css
* { box-sizing: border-box; }
body {
  margin: 0;
  background: #fff;
  color: #111;
  font-family: "Noto Sans", "Noto Sans CJK SC", sans-serif;
  font-size: 12px;
}
svg { fill: none; display: block; flex: none; }
.sprite { position: absolute; width: 0; height: 0; }
button {
  border: 0;
  padding: 0;
  margin: 0;
  background: none;
  color: inherit;
  font: inherit;
}
h1, h2 { margin: 0; font-size: 12px; font-weight: 400; }
.o { stroke: #ec7a08; stroke-width: 3; }
.c { stroke: #00a3c9; stroke-width: 3; }
.k { stroke: #444; stroke-width: 3; }
.b { stroke: #111; stroke-width: 3; }
.w { stroke: #fff; stroke-width: 3; }
.w4 { stroke: #fff; stroke-width: 4; }
.ring { fill: #fff; stroke: #222; stroke-width: 3; }

.arr {
  flex: none;
  width: 6px;
  height: 3px;
  background: #111;
  clip-path: polygon(0 0, 100% 0, 50% 100%);
}
.arr.lite { background: #fff; }
.arr.dim { background: #2f86a8; }

.app { position: relative; display: flex; flex-direction: column; height: 100vh; }

/* title and menu */
.top {
  flex: none;
  height: 56px;
  background: linear-gradient(to right, #006289, #0079a5);
  color: #fff;
}
.titlebar { display: flex; align-items: center; height: 26px; }
.logo { width: 40px; padding-left: 4px; font-size: 21px; line-height: 26px; font-weight: 800; }
.vs { flex: none; width: 1px; height: 18px; margin: 0 3px; background: #084c68; }
.qb { display: flex; align-items: center; flex: none; gap: 4px; padding: 0 3px 0 4px; font-size: 11px; }
.qb svg { width: 16px; height: 16px; }
.qb.dim svg { opacity: .22; }
.titlebar .arr { margin: 0 4px 0 5px; }
.titlebar .arr.bar { height: 7px; background: #fff; clip-path: polygon(0 0, 100% 0, 100% 20%, 0 20%, 0 50%, 100% 50%, 50% 100%, 0 50%); }
.caption { flex: 1; text-align: center; }
.brand { font-size: 13px; font-weight: 900; padding-right: 19px; }
.wb { padding: 0 4px; }
.wb svg { width: 16px; height: 16px; }

.menubar { display: flex; align-items: center; height: 30px; }
.tabs { display: flex; flex: 1; height: 30px; }
.tabs a {
  flex: none;
  height: 28px;
  padding: 0 12px;
  color: #fff;
  font-size: 13px;
  line-height: 29px;
  text-decoration: none;
  white-space: nowrap;
}
.tabs .file { padding: 0 25px 0 20px; }
.tabs .on { color: #ffcf4a; border-bottom: 2px solid #ffcf4a; }
.search {
  display: flex;
  align-items: center;
  flex: none;
  width: 178px;
  height: 22px;
  border: 1px solid #777;
  background: #fff;
}
.search input { flex: 1; min-width: 0; border: 0; padding: 0; font: inherit; font-size: 11px; outline: 0; }
.search input::placeholder { color: #aaa; opacity: 1; }
.search svg { width: 17px; height: 17px; margin-right: 2px; }
.helpers { display: flex; align-items: center; gap: 10px; padding: 0 6px 0 10px; font-size: 11px; }
.helpers svg { width: 16px; height: 16px; }
.tut { display: flex; align-items: center; gap: 4px; }

/* ribbon */
.ribbon { display: flex; flex: none; position: relative; height: 94px; border-bottom: 1px solid #dcdcdc; }
.grp { flex: none; margin: 5px 0 4px; border-right: 1px solid #dcdcdc; }
.g1 { padding: 0 10px 0 13px; }
.g2 { padding: 0 10px 0 12px; }
.g3 { padding: 0 8px; }
.g4 { padding: 0 7px 0 8px; }
.g5 { padding: 0 11px 0 12px; }
.g6 { padding: 0 10px 0 12px; }
.tools { display: flex; height: 69px; }
.g2 .tools { gap: 5px; }
.g5 .tools { gap: 8px; }
.big { display: flex; flex-direction: column; align-items: center; font-size: 11px; line-height: 14px; white-space: nowrap; }
.big svg { width: 32px; height: 32px; margin-bottom: 5px; }
.big .arr { margin-top: 6px; }
.g3 .big, .g4 .big { width: 40px; }
.grid { display: grid; grid-auto-rows: 34px; }
.c3 { grid-template-columns: repeat(3, 33px); }
.c2 { grid-template-columns: repeat(2, 33px); }
.c6 { grid-template-columns: repeat(6, 33px); }
.grid button { display: flex; align-items: center; justify-content: center; }
.grid svg { width: 24px; height: 24px; }
.more { margin: 15px 4px 0; }
.cap { display: flex; align-items: center; height: 20px; color: #00618a; font-size: 11px; line-height: 20px; }
.cap span { flex: 1; text-align: center; }
.g2 .cap span, .g3 .cap span, .g4 .cap span { padding-right: 14px; }
.end { position: absolute; right: 6px; bottom: 8px; }

/* selection bar */
.selbar { display: flex; align-items: center; flex: none; position: relative; height: 28px; border-bottom: 1px solid #aaa; font-size: 11px; }
.menu { display: flex; align-items: center; padding-left: 13px; gap: 6px; }
.menu svg { width: 11px; height: 11px; }
.sep { width: 1px; height: 20px; margin: 0 12px 0 8px; background: #d8d8d8; }
.dd { position: relative; height: 22px; }
.f1 { width: 149px; }
.f2 { width: 156px; }
.dd select {
  width: 100%;
  height: 22px;
  padding: 0 2px;
  border: 1px solid #777;
  border-radius: 0;
  background: #fff;
  color: #111;
  font: inherit;
  appearance: none;
}
.dd::after {
  content: "";
  position: absolute;
  right: 4px;
  top: 10px;
  border: 4px solid transparent;
  border-top-color: #111;
  border-bottom: 0;
}
.sb { margin: 0 9px; }
.sb + .sb { margin-left: 0; }
.sb svg { width: 16px; height: 16px; }

/* work area */
.work { display: flex; flex: 1; min-height: 0; }
.rail { flex: none; width: 37px; border-right: 1px solid #a8a8a8; background: #dcdcdc; }
.rail button { display: flex; align-items: center; justify-content: center; width: 36px; height: 44px; padding-left: 2px; }
.rail .gear { height: 32px; padding: 0 0 2px; }
.rail svg { width: 25px; height: 25px; }
.rail .gear svg { width: 17px; height: 17px; }
.rail .on { width: 34px; margin-left: 3px; padding: 0; border: 1px solid #aaa; border-right: 0; background: #fff; }
.rail .on svg { width: 27px; }

.panel { display: flex; flex-direction: column; flex: none; width: 306px; padding: 0 9px 6px 8px; border-right: 1px solid #aaa; }
.phead { display: flex; align-items: center; flex: none; height: 27px; margin-left: -2px; padding-bottom: 2px; }
.phead svg { width: 17px; height: 16px; }
.phead h2 { flex: 1; padding-left: 3px; font-weight: 500; }
.maxi { width: 12px; height: 11px; margin: 2px 2px 0 0; border: 1px solid #000; border-top-width: 2px; }
.grid-box { display: flex; flex-direction: column; flex: 1; min-height: 0; border: 1px solid #dcdcdc; background: #efefef; }
.scroller { flex: 1; min-height: 0; position: relative; overflow: hidden; }
table { width: 100%; table-layout: fixed; border-collapse: separate; border-spacing: 0; }
.w1 { width: 196px; }
.w2 { width: 39px; }
.w3 { width: 24px; }
th {
  height: 21px;
  padding: 1px 0 0 6px;
  border-right: 1px solid #d4d4d4;
  border-bottom: 1px solid #d4d4d4;
  font-weight: 400;
  line-height: 19px;
  text-align: left;
  white-space: nowrap;
  overflow: hidden;
}
th:last-child { border-right: 0; }
.sort { display: inline-block; margin-left: 17px; border: 5px solid transparent; border-bottom-color: #111; border-top: 0; vertical-align: 1px; }
td { height: 20px; padding: 0; border-right: 1px solid #e6e6e6; border-bottom: 1px solid #e6e6e6; background: #fff; }
tr:nth-child(even) td { background: #f9f9f9; }
td div { display: flex; align-items: center; height: 19px; line-height: 18px; overflow: hidden; white-space: nowrap; }
td svg { width: 16px; height: 16px; margin: 0 auto; }
td div svg { margin: 0; }
td div svg + svg { margin: 0 3px 0 0; }
.mark svg { margin: 0 0 0 6px; }
.off { color: #9c9c9c; }
.cur { font-weight: 700; }
.g {
  --dots: repeating-linear-gradient(to bottom, #aaa 0 1px, transparent 1px 2px);
  --dash: repeating-linear-gradient(to right, #aaa 0 1px, transparent 1px 2px) 10px 10px / 9px 1px no-repeat;
  flex: none;
  position: relative;
  width: 19px;
  height: 19px;
}
.v { background: var(--dots) 9px 0 / 1px 100% no-repeat; }
.t { background: var(--dots) 9px 0 / 1px 100% no-repeat, var(--dash); }
.e { background: var(--dots) 9px 0 / 1px 10px no-repeat, var(--dash); }
.down { background: var(--dots) 9px 10px / 1px 10px no-repeat, var(--dash); }
.box::before {
  content: "";
  position: absolute;
  left: 5px;
  top: 6px;
  width: 9px;
  height: 9px;
  border: 1px solid #bbb;
  background: linear-gradient(#111, #111) center / 5px 1px no-repeat #fff;
}
.plus::before { background: linear-gradient(#111, #111) center / 5px 1px no-repeat, linear-gradient(#111, #111) center / 1px 5px no-repeat #fff; }
.vbar { position: absolute; top: 21px; right: 0; bottom: 0; width: 17px; background: #efefef; }
.vbar i { display: block; width: 2px; height: 600px; margin: 17px 0 0 8px; background: #858585; }
.hbar { flex: none; height: 17px; }
.hbar i { display: block; width: 187px; height: 2px; margin: 8px 0 0 17px; background: #858585; }
.splitter { flex: none; height: 6px; margin-top: 2px; border: 1px solid #aaa; background: #dcdcdc; }
.acc { flex: none; padding-top: 2px; }
.acc button {
  display: flex;
  align-items: center;
  width: 100%;
  height: 24px;
  padding: 3px 0 0 10px;
  border-bottom: 2px solid #d0d0d0;
  color: #00618a;
  font-size: 14px;
  line-height: 19px;
}
.acc button::before { content: ""; margin-right: 9px; border: 4px solid transparent; border-left: 5px solid #00618a; border-right: 0; }

.view { display: flex; flex-direction: column; flex: 1; min-width: 0; border-bottom: 1px solid #ddd; }
.doctabs { flex: none; height: 27px; border-bottom: 2px solid #005f87; }
.doctab { display: flex; align-items: center; width: 157px; height: 25px; padding: 0 5px 2px 7px; background: #005f87; }
.doctab > svg { width: 10px; height: 13px; }
.pill { flex: 1; height: 18px; margin: 0 1px 0 -1px; border-radius: 9px; background: #fff; }
.doctab button svg { width: 10px; height: 10px; }
.canvas { position: relative; flex: 1; min-height: 0; }
.dwg { width: 100%; height: 100%; }
.ln { stroke: #000; stroke-width: 1.8px; }
.dash { stroke-width: 1px; stroke-dasharray: 9 7; }
.ctr { stroke: #999; }
.ctd { stroke: #666; }
.hz { stroke: #000; }
.cy { stroke: #4fc0ff; stroke-width: 1.5px; }
.ht1 { stroke: #93a3c0; }
.ht2 { stroke: #1f4f9f; }
.sheetname { position: absolute; left: 11px; bottom: 2px; color: #7acbfb; font-size: 13px; line-height: 18px; }

.status { flex: none; height: 22px; padding-left: 3px; border-top: 1px solid #aaa; font-size: 11px; font-weight: 700; line-height: 19px; }
.strip { flex: none; height: 3px; border-top: 1px solid #a8b4b8; background: #d5e6ec; }

.ime {
  position: absolute;
  right: 72px;
  bottom: 4px;
  display: flex;
  align-items: center;
  gap: 8px;
  height: 26px;
  padding-right: 4px;
  border: 1px solid #a9c6e2;
  border-left: 0;
  background: #fff;
}
.ime svg { width: 16px; height: 16px; }
.ime .sogou { width: 32px; height: 30px; margin-right: -2px; }
.credit {
  position: absolute;
  right: 4px;
  bottom: 11px;
  color: rgba(226, 226, 226, .85);
  font-family: "Noto Sans CJK SC", sans-serif;
  font-size: 38px;
  font-weight: 300;
  line-height: 48px;
  text-shadow: 1px 1px 1px rgba(120, 120, 120, .7);
  white-space: nowrap;
}
```
